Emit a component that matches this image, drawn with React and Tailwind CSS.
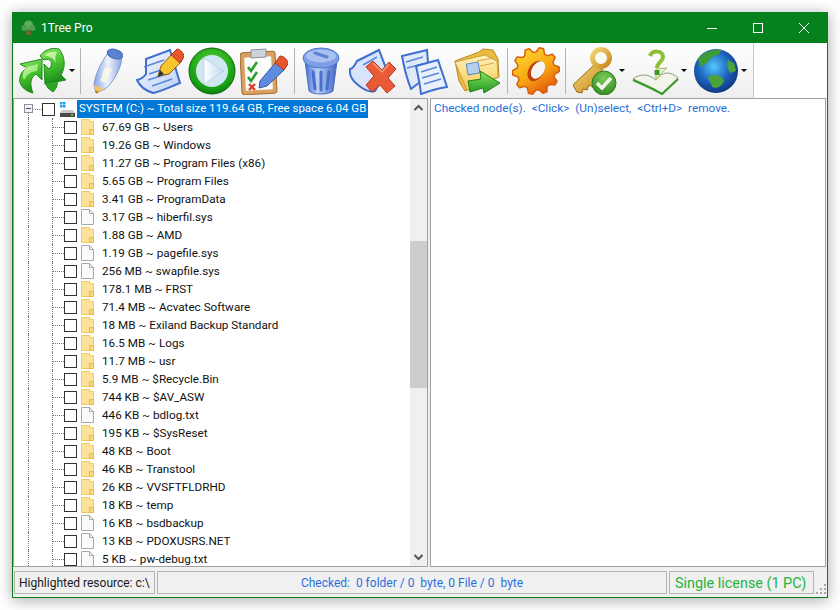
import React from "react";

const files = [
  ["67.69 GB ~ Users", "folder"],
  ["19.26 GB ~ Windows", "folder"],
  ["11.27 GB ~ Program Files (x86)", "folder"],
  ["5.65 GB ~ Program Files", "folder"],
  ["3.41 GB ~ ProgramData", "folder"],
  ["3.17 GB ~ hiberfil.sys", "file"],
  ["1.88 GB ~ AMD", "folder"],
  ["1.19 GB ~ pagefile.sys", "file"],
  ["256 MB ~ swapfile.sys", "file"],
  ["178.1 MB ~ FRST", "folder"],
  ["71.4 MB ~ Acvatec Software", "folder"],
  ["18 MB ~ Exiland Backup Standard", "folder"],
  ["16.5 MB ~ Logs", "folder"],
  ["11.7 MB ~ usr", "folder"],
  ["5.9 MB ~ $Recycle.Bin", "folder"],
  ["744 KB ~ $AV_ASW", "folder"],
  ["446 KB ~ bdlog.txt", "file"],
  ["195 KB ~ $SysReset", "folder"],
  ["48 KB ~ Boot", "folder"],
  ["46 KB ~ Transtool", "folder"],
  ["26 KB ~ VVSFTFLDRHD", "folder"],
  ["18 KB ~ temp", "folder"],
  ["16 KB ~ bsdbackup", "file"],
  ["13 KB ~ PDOXUSRS.NET", "file"],
  ["5 KB ~ pw-debug.txt", "file"],
];

const FolderIcon = () => (
  <svg width="13" height="16" viewBox="0 0 13 16" className="shrink-0">
    <path d="M0.5 0.5H8.5V2.5H12.5V15.5H0.5Z" fill="#fde39a" stroke="#f2c95f" />
    <path d="M8.5 10.5H12.5V15.5H8.5Z" fill="#fbd778" stroke="#e9bb4a" />
  </svg>
);

const FileIcon = () => (
  <svg width="13" height="16" viewBox="0 0 13 16" className="shrink-0">
    <path d="M0.5 0.5H8.5L12.5 4.5V15.5H0.5Z" fill="#fafafa" stroke="#a8a8a8" />
    <path d="M8.5 0.5V4.5H12.5" fill="none" stroke="#a8a8a8" />
  </svg>
);

const DriveIcon = () => (
  <svg width="15" height="15" viewBox="0 0 15 15" className="shrink-0">
    <rect x="0" y="0" width="2.5" height="2.5" fill="#1ca5e6" />
    <rect x="3" y="0" width="2.5" height="2.5" fill="#1ca5e6" />
    <rect x="0" y="3" width="2.5" height="2.5" fill="#1ca5e6" />
    <rect x="3" y="3" width="2.5" height="2.5" fill="#1ca5e6" />
    <path d="M2 8H13L15 11H0Z" fill="#c9c9c9" />
    <rect x="0" y="11" width="15" height="4" fill="#4a4a4a" />
    <rect x="11" y="12" width="2" height="1.5" fill="#7be05c" />
  </svg>
);

const Check = () => <span className="w-[13px] h-[13px] shrink-0 border border-[#333333] bg-white" />;
const GuideV = () => <span className="w-0 shrink-0 border-l border-dotted border-[#777777]" />;
const GuideH = ({ w }) => <span className={`${w} h-0 self-center shrink-0 border-t border-dotted border-[#777777]`} />;

const TreeRow = ({ label, type }) => (
  <div className="flex h-[18px] items-stretch">
    <span className="w-[14px] shrink-0" />
    <GuideV />
    <span className="w-[23px] shrink-0" />
    <GuideV />
    <GuideH w="w-[11px]" />
    <span className="self-center flex items-center">
      <Check />
      <span className="w-[4px]" />
      {type === "folder" ? <FolderIcon /> : <FileIcon />}
    </span>
    <span className="self-center ml-[8px] pt-[2px] whitespace-nowrap text-[#111111] text-[11.7px]">{label}</span>
  </div>
);

const RootRow = () => (
  <div className="flex h-[18px] items-stretch relative">
    <span className="w-[14px] shrink-0 relative" />
    <span className="absolute left-[10px] top-[4px] w-[9px] h-[9px] border border-[#8e8e9e] bg-[#f2f2f2] flex items-center justify-center z-10">
      <span className="w-[5px] h-px bg-[#444466]" />
    </span>
    <span className="w-0 shrink-0 self-end h-[5px] border-l border-dotted border-[#777777]" />
    <span className="w-[6px]" />
    <GuideH w="w-[7px]" />
    <span className="self-center flex"><Check /></span>
    <span className="w-[5px]" />
    <span className="self-center"><DriveIcon /></span>
    <span className="w-[2px]" />
    <span className="bg-[#0078d7] text-white h-[18px] flex items-center px-[2px] whitespace-nowrap text-[11.5px]">
      SYSTEM (C:) ~ Total size 119.64 GB, Free space 6.04 GB
    </span>
  </div>
);

const Icon48 = ({ children }) => (
  <svg width="48" height="48" viewBox="0 0 48 48" className="shrink-0">{children}</svg>
);

const Recycle = () => (
  <svg width="50" height="48" viewBox="0 0 50 48" className="shrink-0">
    <defs>
      <linearGradient id="rg" x1="0" y1="0" x2="0.3" y2="1">
        <stop offset="0" stopColor="#8fe868" />
        <stop offset="0.55" stopColor="#45c22f" />
        <stop offset="1" stopColor="#1f8f1d" />
      </linearGradient>
    </defs>
    <path d="M2 17L24 12L24 33L18 27C13 30 11 36 15 46C6 44 0 37 2 30C3 26 5 23 9 21Z" fill="url(#rg)" stroke="#1f8a1d" />
    <path d="M8 20L20 17L19 24C13 24 8 28 6 33C4 28 5 24 8 20Z" fill="#c9f6a6" opacity="0.75" />
    <path d="M22 9C26 3 34 0 41 2C47 9 48 20 43 28L48 33L27 37L26 17L31 22C36 17 33 10 26 13Z" fill="url(#rg)" stroke="#1f8a1d" />
    <path d="M26 8C30 5 35 4 39 5C37 8 37 12 38 16C36 11 31 9 26 8Z" fill="#d2f7b0" opacity="0.85" />
    <path d="M27 36L39 34C40 38 38 42 35 45L30 41Z" fill="#2ea524" stroke="#1f8a1d" />
  </svg>
);

const DropArrow = () => (
  <span className="w-0 h-0 shrink-0 border-x-[3px] border-t-[3px] border-x-transparent border-t-black" />
);

const Sep = () => <span className="w-px h-[46px] bg-[#b5b5b5] shrink-0" />;

const Pencil = () => (
  <Icon48>
    <defs>
      <linearGradient id="pn" x1="0" y1="0" x2="1" y2="0">
        <stop offset="0" stopColor="#87a5e6" />
        <stop offset="0.5" stopColor="#eef3fc" />
        <stop offset="1" stopColor="#8aa6dd" />
      </linearGradient>
    </defs>
    <path d="M24 6L38 10C37 22 29 36 21 42L12 46L10 38C11 27 18 14 24 6Z" fill="url(#pn)" stroke="#7f98cf" />
    <ellipse cx="31" cy="7" rx="8" ry="4.5" transform="rotate(17 31 7)" fill="#5c82d4" stroke="#4468bc" />
    <path d="M21 20L28 22L21 36L16 34Z" fill="#fbfbe6" opacity="0.8" />
    <path d="M10 38L21 42L12 46Z" fill="#f4c66a" />
    <path d="M11 43L15 45L12 46.5Z" fill="#c9780f" />
  </Icon48>
);

const Page = () => (
  <>
    <defs>
      <linearGradient id="dc" x1="0" y1="0" x2="1" y2="1">
        <stop offset="0" stopColor="#f6f9ff" />
        <stop offset="1" stopColor="#bcd0f4" />
      </linearGradient>
    </defs>
    <path d="M10 12L34 3L44 36C36 39 25 45 17 46C11 44 4 40 1 33C5 32 8 30 10 27Z" fill="url(#dc)" stroke="#3f6fd0" strokeWidth="2" />
    <path d="M8 20L28 13M13 27L28 22M12 33L34 26M16 39L36 32" stroke="#5c86da" strokeWidth="1.6" />
  </>
);

const DocPencil = () => (
  <Icon48>
    <Page />
    <path d="M22 29L25 19L37 6L46 14L33 27Z" fill="#f8c52f" stroke="#8c5f10" />
    <path d="M35 8L41 2C44 2 48 6 48 10L44 16Z" fill="#e6572a" stroke="#b8361c" />
    <path d="M22 30L24 23L28 27Z" fill="#333333" />
  </Icon48>
);

const Play = () => (
  <Icon48>
    <defs>
      <radialGradient id="pl" cx="0.5" cy="0.35" r="0.7">
        <stop offset="0" stopColor="#59d034" />
        <stop offset="0.75" stopColor="#16a014" />
        <stop offset="1" stopColor="#0a6f0c" />
      </radialGradient>
      <linearGradient id="pw" x1="0" y1="0" x2="1" y2="0">
        <stop offset="0" stopColor="#ffffff" />
        <stop offset="1" stopColor="#bcd6f4" />
      </linearGradient>
    </defs>
    <circle cx="24" cy="24" r="23" fill="url(#pl)" stroke="#0a640c" />
    <circle cx="24" cy="24" r="16" fill="#cfe7ef" />
    <path d="M16 11L36 24L16 37Z" fill="url(#pw)" stroke="#a9c4e6" strokeWidth="0.6" />
  </Icon48>
);

const Clipboard = () => (
  <Icon48>
    <rect x="1" y="5" width="35" height="42" rx="3" fill="#d9a060" stroke="#a06a2c" transform="rotate(-3 18 26)" />
    <rect x="5" y="10" width="27" height="33" fill="#fbfbfb" transform="rotate(-3 18 26)" />
    <path d="M11 3L26 2V10L11 11Z" fill="#cfd3da" stroke="#8a8f99" />
    <path d="M8 20L11 24L17 15" fill="none" stroke="#2aa02a" strokeWidth="2.6" />
    <path d="M8 30L11 34L17 25" fill="none" stroke="#2aa02a" strokeWidth="2.6" />
    <path d="M9 37L15 43M15 37L9 43" stroke="#d8402a" strokeWidth="2.4" />
    <path d="M20 34L36 15L45 22L27 39L19 41Z" fill="#5f8ce0" stroke="#34599f" />
    <path d="M35 16L40 9C44 9 48 13 48 17L44 23Z" fill="#e6572a" stroke="#b8361c" />
  </Icon48>
);

const Trash = () => (
  <Icon48>
    <defs>
      <linearGradient id="tr" x1="0" y1="0" x2="1" y2="0">
        <stop offset="0" stopColor="#3f6ad4" />
        <stop offset="0.4" stopColor="#bcd2f6" />
        <stop offset="1" stopColor="#3f62c0" />
      </linearGradient>
    </defs>
    <path d="M8 14L12 44C16 48 32 48 36 44L40 14Z" fill="url(#tr)" stroke="#4a6ec8" />
    <ellipse cx="24" cy="11" rx="18" ry="10" fill="#7e9fe6" stroke="#4f78d0" />
    <ellipse cx="24" cy="9" rx="15" ry="6.5" fill="#a9c1f1" />
    <path d="M18 6L30 10" stroke="#5d82d4" strokeWidth="3" strokeLinecap="round" />
    <path d="M16 25L18 42M24 25V43M32 25L30 42" stroke="#4a6ecb" strokeWidth="3" strokeLinecap="round" />
  </Icon48>
);

const DocX = () => (
  <Icon48>
    <path d="M8 14L30 3L38 24L26 44C21 46 14 42 9 38C4 34 0 28 1 22C4 22 6 18 8 14Z" fill="#d8e4f9" stroke="#3f6fd0" strokeWidth="2" />
    <path d="M14 18L28 10" stroke="#5c86da" strokeWidth="1.6" />
    <path d="M17 20L24 14L33 23L40 15L47 22L39 31L46 39L38 46L31 38L23 45L17 38L25 29Z" fill="#ea5a36" stroke="#b8361c" />
    <path d="M24 16L33 25L40 17" fill="none" stroke="#f79a7e" strokeWidth="1.5" />
  </Icon48>
);

const Docs = () => (
  <Icon48>
    <path d="M1 9L26 3L28 28L10 42C6 32 3 20 1 9Z" fill="#dfe9fa" stroke="#3f6fd0" strokeWidth="2" />
    <path d="M5 15L22 10M6 21L22 17" stroke="#5c86da" strokeWidth="1.6" />
    <path d="M15 19L37 13L46 40C38 41 28 44 20 47C19 37 17 28 15 19Z" fill="#e8f0fc" stroke="#3f6fd0" strokeWidth="2" />
    <path d="M20 25L36 20M21 31L38 26M23 37L40 32" stroke="#5c86da" strokeWidth="1.6" />
  </Icon48>
);

const FolderGo = () => (
  <Icon48>
    <defs>
      <linearGradient id="fd" x1="0" y1="0" x2="0" y2="1">
        <stop offset="0" stopColor="#fff3bf" />
        <stop offset="1" stopColor="#f7c94f" />
      </linearGradient>
      <linearGradient id="fa" x1="0" y1="0" x2="0" y2="1">
        <stop offset="0" stopColor="#8be05c" />
        <stop offset="1" stopColor="#1f9a22" />
      </linearGradient>
    </defs>
    <path d="M2 14L26 5L30 2L40 3L45 12L46 30L12 44L6 34Z" fill="#eeb93f" stroke="#b88a28" />
    <path d="M2 15L32 8L44 14L45 30L14 43Z" fill="url(#fd)" stroke="#c9a03e" />
    <path d="M24 14L40 11M27 19L41 16" stroke="#d8a84a" />
    <rect x="14" y="16" width="12" height="11" fill="#b5cfee" stroke="#5c86c8" transform="rotate(-10 20 21)" />
    <path d="M15 34L28 32L27 24L47 36L31 46L30 41L17 45Z" fill="url(#fa)" stroke="#23801b" />
  </Icon48>
);

const gearPath = (() => {
  const teeth = 10;
  const pts = [];
  for (let i = 0; i < teeth; i++) {
    const a = (i / teeth) * Math.PI * 2;
    const s = (Math.PI * 2) / teeth;
    [[19, -0.5], [23.5, -0.27], [23.5, 0.02], [19, 0.25]].forEach(([r, f]) => {
      const t = a + f * s;
      pts.push(`${(24 + r * Math.cos(t)).toFixed(1)} ${(24 + r * Math.sin(t)).toFixed(1)}`);
    });
  }
  return `M${pts.join("L")}Z`;
})();

const Gear = () => (
  <Icon48>
    <defs>
      <linearGradient id="gr" x1="0.2" y1="0" x2="0.8" y2="1">
        <stop offset="0" stopColor="#fdd92e" />
        <stop offset="0.55" stopColor="#f7a412" />
        <stop offset="1" stopColor="#dd4a0c" />
      </linearGradient>
    </defs>
    <path d={gearPath} fill="url(#gr)" stroke="#d9600e" strokeLinejoin="round" strokeWidth="1.5" />
    <ellipse cx="24" cy="24" rx="7.5" ry="11" transform="rotate(32 24 24)" fill="#c2410c" />
    <ellipse cx="26" cy="23" rx="6" ry="9.5" transform="rotate(32 26 23)" fill="#f5f5f2" />
  </Icon48>
);

const Key = () => (
  <Icon48>
    <defs>
      <linearGradient id="ky" x1="0" y1="0" x2="1" y2="1">
        <stop offset="0" stopColor="#f3d777" />
        <stop offset="1" stopColor="#c88a1c" />
      </linearGradient>
      <radialGradient id="ck" cx="0.5" cy="0.3" r="0.75">
        <stop offset="0" stopColor="#7ccb58" />
        <stop offset="1" stopColor="#2f8a22" />
      </radialGradient>
    </defs>
    <path d="M26 16L3 38L7 45L12 46L13 42L17 43L19 38L23 40L24 34L33 22Z" fill="url(#ky)" stroke="#9c6c14" />
    <circle cx="31" cy="11" r="8.5" fill="#fbfbf6" stroke="url(#ky)" strokeWidth="5" />
    <circle cx="34" cy="36" r="12" fill="url(#ck)" stroke="#34801f" />
    <path d="M27 36L32 41L41 31" fill="none" stroke="#f0f7ea" strokeWidth="3.5" />
  </Icon48>
);

const Book = () => (
  <Icon48>
    <path d="M1 32C8 26 17 27 24 33C28 27 36 22 46 31L30 47C24 42 12 37 1 32Z" fill="#f2f4ea" stroke="#8a9a7a" />
    <path d="M24 33L24 22L35 21C30 25 27 29 24 33Z" fill="#eef3d6" stroke="#a4c060" />
    <path d="M1 33C10 37 22 42 30 47L46 32" fill="none" stroke="#3c9a2a" strokeWidth="2.2" />
    <path d="M18 9C20 3 31 3 31 10C31 15 25 15 25 21" fill="none" stroke="#8fbf3a" strokeWidth="4" />
    <rect x="22.5" y="23" width="5" height="5" fill="#3c9a2a" />
  </Icon48>
);

const Globe = () => (
  <Icon48>
    <defs>
      <radialGradient id="gl" cx="0.45" cy="0.4" r="0.65">
        <stop offset="0" stopColor="#54c8fa" />
        <stop offset="0.55" stopColor="#1d62bf" />
        <stop offset="1" stopColor="#0d2f74" />
      </radialGradient>
    </defs>
    <circle cx="24" cy="24" r="22" fill="url(#gl)" />
    <path d="M6 12C12 4 22 2 30 3L26 8L20 10L15 16L8 20Z" fill="#3f9c39" />
    <path d="M16 30C22 26 30 28 32 34C30 40 24 42 20 40C20 36 16 34 16 30Z" fill="#4ba33a" />
    <path d="M36 13L42 16L44 24L38 26C36 22 34 18 36 13Z" fill="#4ba33a" />
  </Icon48>
);

const TreeLogo = () => (
  <svg width="15" height="16" viewBox="0 0 15 16" className="shrink-0">
    <path d="M6 9H9L10 15H5Z" fill="#8a5a2c" />
    <circle cx="7.5" cy="5" r="4.5" fill="#5fae5a" />
    <circle cx="3.5" cy="8" r="3" fill="#4c9e52" />
    <circle cx="11.5" cy="8" r="3" fill="#4c9e52" />
  </svg>
);

const App = () => {
  return (
    <div className="w-[840px] h-[610px] bg-white pt-3 pl-3 overflow-hidden font-['Roboto',sans-serif] text-[12px]">
      <div className="w-[816px] h-[586px] flex flex-col border border-[#0a7e1f] bg-[#f0f0f0] shadow-[0_2px_14px_rgba(0,0,0,0.35)]">
        {/* title bar */}
        <div className="h-[30px] shrink-0 bg-[#07801e] flex items-center text-white pl-[8px]">
          <TreeLogo />
          <span className="ml-[5px] text-[12px]">1Tree Pro</span>
          <div className="ml-auto flex items-center">
            <svg width="46" height="30" viewBox="0 0 46 30"><path d="M18 15.5H28" stroke="#fff" /></svg>
            <svg width="46" height="30" viewBox="0 0 46 30"><rect x="18.5" y="10.5" width="9" height="9" fill="none" stroke="#fff" /></svg>
            <svg width="46" height="30" viewBox="0 0 46 30"><path d="M18 10L28 20M28 10L18 20" stroke="#fff" /></svg>
          </div>
        </div>

        {/* toolbar */}
        <div className="h-[55px] shrink-0 flex bg-white">
          <div className="w-[741px] shrink-0 flex items-center pl-[5px] bg-gradient-to-b from-[#ffffff] to-[#eeeeee] border-r border-[#c8c8c8]">
            <Recycle />
            <span className="w-[1px]" />
            <DropArrow />
            <span className="w-[5px]" />
            <Sep />
            <span className="w-[3px]" />
            <div className="flex items-center gap-[4px]">
              <Pencil />
              <DocPencil />
              <Play />
              <Clipboard />
            </div>
            <span className="w-[6px]" />
            <Sep />
            <span className="w-[2px]" />
            <div className="flex items-center gap-[4px]">
              <Trash />
              <DocX />
              <Docs />
              <FolderGo />
            </div>
            <span className="w-[6px]" />
            <Sep />
            <span className="w-[4px]" />
            <Gear />
            <span className="w-[5px]" />
            <Sep />
            <span className="w-[4px]" />
            <Key />
            <span className="w-[1px]" />
            <DropArrow />
            <span className="w-[7px]" />
            <Book />
            <span className="w-[1px]" />
            <DropArrow />
            <span className="w-[5px]" />
            <Globe />
            <span className="w-[1px]" />
            <DropArrow />
          </div>
        </div>

        {/* panes */}
        <div className="flex-1 min-h-0 flex bg-[#f0f0f0]">
          <div className="w-[415px] shrink-0 flex border border-[#a0a0a0] bg-white overflow-hidden">
            <div className="flex-1 min-w-0 overflow-hidden pt-px">
              <RootRow />
              {files.map(([label, type]) => (
                <TreeRow key={label} label={label} type={type} />
              ))}
            </div>
            <div className="w-[17px] shrink-0 bg-[#f0f0f0] flex flex-col items-center">
              <svg width="17" height="18" viewBox="0 0 17 18" className="shrink-0">
                <path d="M4.5 11L8.5 7L12.5 11" fill="none" stroke="#555555" strokeWidth="2" />
              </svg>
              <div className="h-[124px] shrink-0" />
              <div className="w-full h-[147px] shrink-0 bg-[#cdcdcd]" />
              <div className="flex-1" />
              <svg width="17" height="18" viewBox="0 0 17 18" className="shrink-0">
                <path d="M4.5 7L8.5 11L12.5 7" fill="none" stroke="#555555" strokeWidth="2" />
              </svg>
            </div>
          </div>
          <div className="w-[2px] shrink-0" />
          <div className="flex-1 min-w-0 border border-[#a0a0a0] bg-white px-[3px] pt-px text-[#1f6fd8] text-[11.8px] mr-px whitespace-pre">
            Checked node(s).  &lt;Click&gt;  (Un)select,  &lt;Ctrl+D&gt;  remove.
          </div>
        </div>

        {/* status bar */}
        <div className="h-[30px] shrink-0 flex items-center pl-px pt-px gap-[2px] bg-[#f0f0f0]">
          <div className="w-[141px] h-[23px] shrink-0 border border-[#b4b4b4] flex items-center pl-[4px] text-[#1a1a1a] whitespace-nowrap">
            Highlighted resource: c:\
          </div>
          <div className="w-[510px] h-[23px] shrink-0 border border-[#b4b4b4] flex items-center justify-center text-[#2c6fdc] whitespace-pre">
            Checked:  0 folder / 0  byte, 0 File / 0  byte
          </div>
          <div className="w-[145px] h-[23px] shrink-0 border border-[#b4b4b4] flex items-center pl-[5px] pt-[2px] text-[#26b33e] text-[14.4px] whitespace-nowrap">
            Single license (1 PC)
          </div>
          <svg width="12" height="12" viewBox="0 0 12 12" className="shrink-0 self-end mb-[1px]">
            <g fill="#a8a8a8">
              <rect x="8" y="0" width="2" height="2" />
              <rect x="4" y="4" width="2" height="2" />
              <rect x="8" y="4" width="2" height="2" />
              <rect x="0" y="8" width="2" height="2" />
              <rect x="4" y="8" width="2" height="2" />
              <rect x="8" y="8" width="2" height="2" />
            </g>
          </svg>
        </div>
      </div>
    </div>
  );
};

export default App;
